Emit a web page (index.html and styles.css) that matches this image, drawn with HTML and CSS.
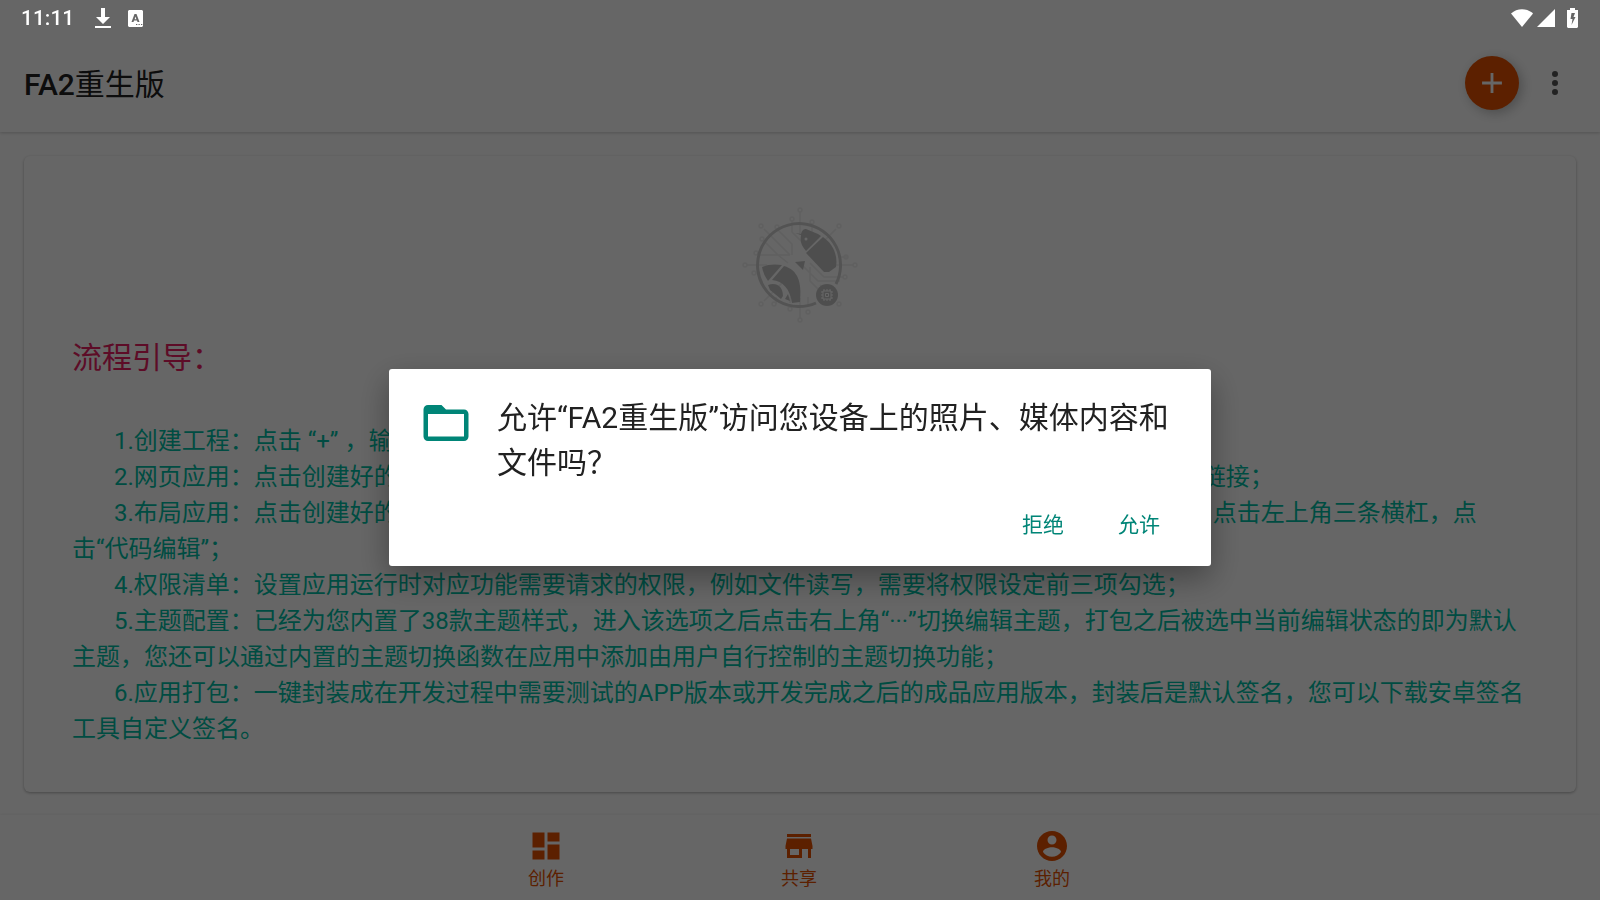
FILE: index.html
```
<!DOCTYPE html>
<html lang="zh-CN">
<head>
  <meta charset="UTF-8">
  <meta name="viewport" content="width=device-width, initial-scale=1">
  <title>FA2重生版</title>
  <link rel="stylesheet" href="styles.css">
</head>
<body>

  <!-- 状态栏 -->
  <div class="status-bar">
    <span class="clock">11:11</span>
    <svg class="status-icon download" viewBox="0 0 16 22"><path d="M6 1h4v9h5l-7 7-7-7h5zM0 19h16v2H0z"/></svg>
    <svg class="status-icon ime" viewBox="0 0 15 17"><path fill-rule="evenodd" d="M1 0h13l1 1v15l-1 1H1l-1-1V1zM6.500 4L3.500 12h2l.5-1.500h3l.5 1.500h2L8.500 4zM7.500 6.500l.9 2.700H6.600zM8 14v1h1.300v-1zM10.500 14v1h1.300v-1zM13 14v1h1.300v-1z"/></svg>
    <span class="spacer"></span>
    <svg class="status-icon wifi" viewBox="0 0 22 18"><path d="M0 4.500C6-1.200 16-1.200 22 4.500L11 18z"/></svg>
    <svg class="status-icon signal" viewBox="0 0 18 18"><path d="M0 18L18 0v18z"/></svg>
    <svg class="status-icon battery" viewBox="0 0 11 20"><path fill-rule="evenodd" d="M3 0h5v2h3v17l-1 1H1l-1-1V2h3zM4.500 5L3.500 11h2l-1 6L8.500 9H6.500L8 5z"/></svg>
  </div>

  <div class="app">
    <header class="app-bar">
      <h1><span class="latin">FA2</span>重生版</h1>
      <button class="fab" aria-label="新建工程">
        <svg viewBox="0 0 24 24"><path d="M19 13h-6v6h-2v-6H5v-2h6V5h2v6h6z"/></svg>
      </button>
      <button class="more" aria-label="更多">
        <svg viewBox="0 0 24 24"><path d="M12 8a2 2 0 1 0 0-4 2 2 0 0 0 0 4zm0 2a2 2 0 1 0 0 4 2 2 0 0 0 0-4zm0 6a2 2 0 1 0 0 4 2 2 0 0 0 0-4z"/></svg>
      </button>
    </header>

    <main class="content">
      <section class="card">
        <svg class="logo" viewBox="0 0 120 120">
          <g class="rays">
            <path d="M60 7V30M60 93V113M7 60H27M93 60H113M24 24L50 50M96 24L80 40M24 96L42 78M96 96L80 80"/>
            <path d="M52 16V27L68 43M37 24L52 39V50M24 36L38 50H50M20 50H38L48 58M72 19V27M108 52H98M70 62V76L82 88M62 60L78 76H100M70 58L84 72H104M68 100V92M50 98V92M36 99V92"/>
            <circle cx="60" cy="5" r="2"/><circle cx="60" cy="115" r="2"/><circle cx="5" cy="60" r="2"/><circle cx="115" cy="60" r="2"/>
            <circle cx="21" cy="21" r="2"/><circle cx="99" cy="21" r="2"/><circle cx="21" cy="99" r="2"/><circle cx="99" cy="99" r="2"/>
            <circle cx="52" cy="14" r="2"/><circle cx="37" cy="22" r="2"/><circle cx="72" cy="17" r="2"/><circle cx="22" cy="34" r="2"/>
            <circle cx="16" cy="48" r="2"/><circle cx="14" cy="68" r="2"/><circle cx="106" cy="52" r="2"/><circle cx="105" cy="72" r="2"/>
            <circle cx="34" cy="99" r="2"/><circle cx="50" cy="104" r="2"/><circle cx="68" cy="107" r="2"/>
          </g>
          <path class="ring" d="M96 79A41.500 41.500 0 1 0 76 98"/>
          <g class="solid">
            <path d="M55 28l6 1c1-4 3-5 5-5l12 5 3 2-15 15c-5-6-6-10-5-16z"/>
            <path d="M83 32c10 7 15 18 13 30l-7 5h-5L66 48z"/>
            <path d="M55 57l10-1-2 9z"/>
            <path d="M22 62c6-3 14-3 20-2L28 76c-3-4-5-9-6-14z"/>
            <path d="M44 61c14 4 18 16 16 36l-8 1c-2-14-9-22-20-23z"/>
            <path d="M28 80c8-3 15 1 15 11l-2 3-11-9zM45 94l3-5 2 7z"/>
            <circle cx="87" cy="90" r="11"/>
          </g>
          <circle class="eye" cx="66" cy="34" r="1.500"/>
          <path class="chip" d="M83 86h8v8h-8zM85.500 88.500h3v3h-3zM84 84v2M87 84v2M90 84v2M84 94v2M87 94v2M90 94v2M81 87h2M81 90h2M81 93h2M91 87h2M91 90h2M91 93h2"/>
        </svg>

        <h2>流程引导：</h2>

        <div class="guide">
          <p>1.创建工程：点击 “+” ，输入工程名称和应用包名，选择工程类型之后点击创建；</p>
          <p>2.网页应用：点击创建好的工程进入编辑页面，打开网页配置选项，在输入框中填写您需要封装的网站  链接；</p>
          <p>3.布局应用：点击创建好的工程进入布局设计页面，选择需要添加的组件并设置属性，“编写代码”请您先 点击左上角三条横杠，点<span class="keep">击“代码编辑”；</span></p>
          <p>4.权限清单：设置应用运行时对应功能需要请求的权限，例如文件读写，需要将权限设定前三项勾选；</p>
          <p>5.主题配置：已经为您内置了38款主题样式，进入该选项之后点击右上角“···”切换编辑主题，打包之后被选中当前编辑状态的即为默认主题，您还可以通过内置的主题切换函数在应用中添加由用户自行控制的主题切换功能；</p>
          <p>6.应用打包：一键封装成在开发过程中需要测试的APP版本或开发完成之后的成品应用版本，封装后是默认签名，您可以下载安卓签名工具自定义签名。</p>
        </div>
      </section>
    </main>

    <nav class="bottom-nav">
      <a href="#create">
        <svg viewBox="0 0 24 24"><path d="M3 13h8V3H3zm0 8h8v-6H3zm10 0h8V11h-8zm0-18v6h8V3z"/></svg>
        创作
      </a>
      <a href="#share">
        <svg viewBox="0 0 24 24"><path d="M20 4H4v2h16zm1 10v-2l-1-5H4l-1 5v2h1v6h10v-6h4v6h2v-6zm-9 4H6v-4h6z"/></svg>
        共享
      </a>
      <a href="#mine">
        <svg viewBox="0 0 24 24"><path d="M12 2C6.480 2 2 6.480 2 12s4.480 10 10 10 10-4.480 10-10S17.520 2 12 2zm0 3c1.660 0 3 1.340 3 3s-1.340 3-3 3-3-1.340-3-3 1.340-3 3-3zm0 14.200c-2.500 0-4.710-1.280-6-3.220.03-1.990 4-3.080 6-3.080 1.990 0 5.970 1.090 6 3.080-1.290 1.940-3.500 3.220-6 3.220z"/></svg>
        我的
      </a>
    </nav>
  </div>

  <!-- 权限弹窗 -->
  <div class="overlay">
    <div class="dialog" role="dialog" aria-labelledby="dialog-title">
      <div class="dialog-body">
        <svg class="folder" viewBox="0 0 24 24"><path d="M20 6h-8l-2-2H4c-1.100 0-2 .9-2 2v12c0 1.100.9 2 2 2h16c1.100 0 2-.9 2-2V8c0-1.100-.9-2-2-2zm0 12H4V8h16z"/></svg>
        <p id="dialog-title">允许“FA2重生版”访问您设备上的照片、媒体内容和文件吗？</p>
      </div>
      <div class="dialog-actions">
        <button>拒绝</button>
        <button>允许</button>
      </div>
    </div>
  </div>

</body>
</html>
```
FILE: styles.css
```
* {
  box-sizing: border-box;
}

body {
  margin: 0;
  font-family: Roboto, "Noto Sans CJK SC", sans-serif;
  background: #fff;
  color: #212121;
}

h1, h2, p {
  margin: 0;
  font-weight: 400;
}

button {
  border: none;
  padding: 0;
  background: none;
  font-family: inherit;
  cursor: pointer;
}

/* Status bar */
.status-bar {
  position: absolute;
  top: 0;
  left: 0;
  right: 0;
  z-index: 3;
  display: flex;
  align-items: center;
  height: 36px;
  padding: 0 22px 0 21px;
  color: #fff;
}

.clock {
  font-size: 21px;
  font-weight: 500;
  margin-right: 21px;
}

.status-icon {
  fill: #fff;
}

.download {
  width: 16px;
  height: 22px;
  margin-right: 17px;
}

.ime {
  width: 15px;
  height: 17px;
}

.spacer {
  flex: 1;
}

.wifi {
  width: 22px;
  height: 18px;
  margin-right: 4px;
}

.signal {
  width: 18px;
  height: 18px;
  margin-right: 12px;
}

.battery {
  width: 11px;
  height: 20px;
}

/* App */
.app {
  display: flex;
  flex-direction: column;
  min-height: 100vh;
}

.app-bar {
  display: flex;
  align-items: center;
  height: 132px;
  padding: 36px 27px 2px 24px;
  box-shadow: 0 1px 3px rgba(0,0,0,0.2);
}

h1 {
  flex: 1;
  padding-top: 4px;
  font-size: 30px;
  line-height: 44px;
}

.latin {
  font-weight: 500;
}

.fab {
  display: flex;
  align-items: center;
  justify-content: center;
  width: 54px;
  height: 54px;
  margin-right: 18px;
  border-radius: 50%;
  background: #e65100;
  box-shadow: 3px 3px 12px rgba(0,0,0,0.25);
}

.fab svg {
  width: 34px;
  height: 34px;
  fill: #fff;
}

.more svg {
  display: block;
  width: 36px;
  height: 36px;
  fill: #555;
}

.content {
  flex: 1;
  padding: 24px 24px 23px;
}

.card {
  height: 100%;
  padding: 48px 48px 45px;
  border-radius: 6px;
  box-shadow: 0 1px 3px rgba(0,0,0,0.3);
}

.logo {
  display: block;
  width: 120px;
  height: 120px;
  margin: 1px auto 11px;
}

h2 {
  font-size: 30px;
  line-height: 44px;
  color: #e91e63;
}

.guide {
  margin-top: 43px;
  font-size: 24px;
  line-height: 36px;
  color: #00bfa5;
}

.guide p {
  text-indent: 42px;
  white-space: pre-wrap;
}

.guide .keep {
  white-space: nowrap;
}

/* Logo */
.rays {
  fill: none;
  stroke: #efefef;
  stroke-width: 1.5;
}

.ring {
  fill: none;
  stroke: #d0d0d0;
  stroke-width: 3;
}

.solid {
  fill: #c4c4c4;
}

.eye {
  fill: #fff;
}

.chip {
  fill: none;
  stroke: #fff;
  stroke-width: 1;
}

/* Bottom navigation */
.bottom-nav {
  display: flex;
  justify-content: center;
  height: 85px;
  padding-right: 2px;
  box-shadow: 0 -1px 2px rgba(0,0,0,0.05);
}

.bottom-nav a {
  display: flex;
  flex-direction: column;
  align-items: center;
  gap: 2px;
  width: 253px;
  padding-top: 13px;
  font-size: 18px;
  line-height: 26px;
  color: #e65100;
  text-decoration: none;
}

.bottom-nav svg {
  width: 36px;
  height: 36px;
  fill: #e65100;
}

/* Permission dialog */
.overlay {
  position: fixed;
  inset: 0;
  z-index: 2;
  display: flex;
  align-items: center;
  justify-content: center;
  padding-top: 35px;
  background: rgba(0,0,0,0.6);
}

.dialog {
  width: 822px;
  max-width: 90%;
  padding: 26px 28px 16px 30px;
  border-radius: 3px;
  background: #fff;
  box-shadow: 0 12px 32px rgba(0,0,0,0.35);
}

.dialog-body {
  display: flex;
  gap: 24px;
  padding-right: 8px;
  font-size: 30px;
  line-height: 45px;
}

.folder {
  flex: none;
  width: 54px;
  height: 54px;
  margin-top: 1px;
  fill: #008577;
}

.dialog-actions {
  display: flex;
  justify-content: flex-end;
  gap: 8px;
  margin-top: 11px;
}

.dialog-actions button {
  width: 88px;
  height: 54px;
  font-size: 21px;
  color: #008577;
}
```
